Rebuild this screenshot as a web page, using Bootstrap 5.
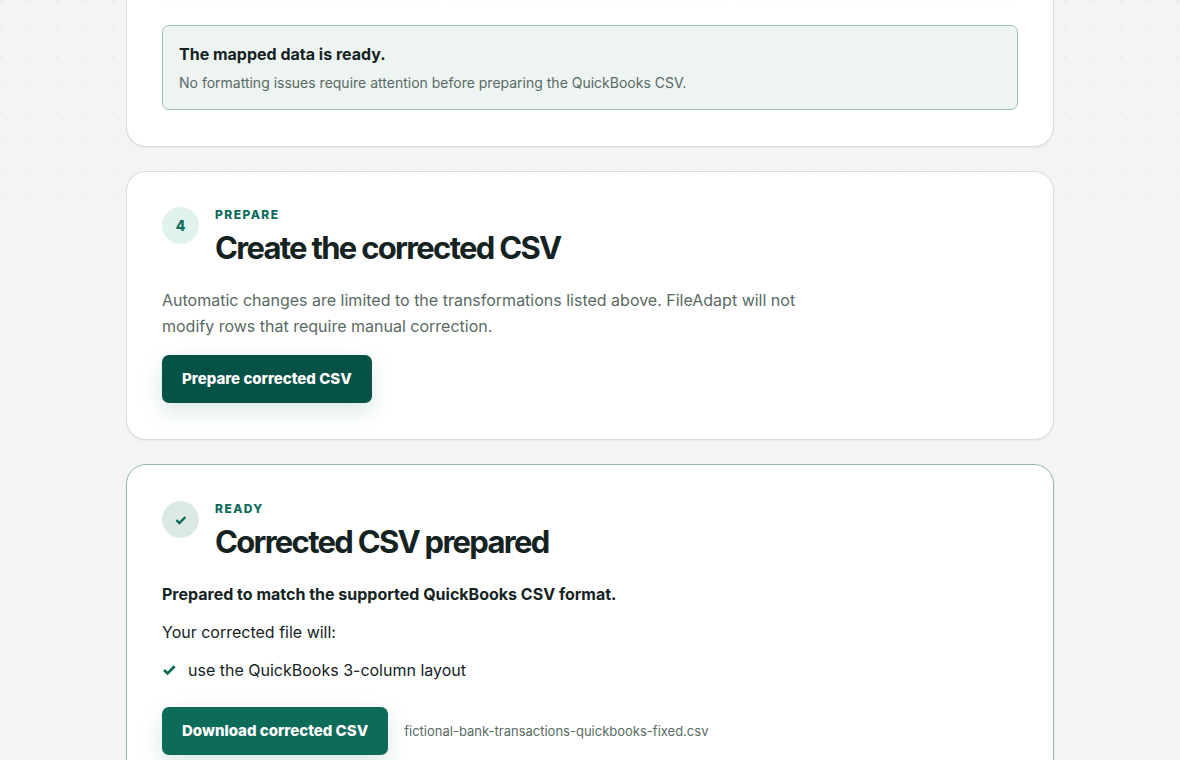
<!DOCTYPE html>
<html lang="en">
<head>
<meta charset="utf-8">
<meta name="viewport" content="width=device-width, initial-scale=1">
<title>FileAdapt</title>
<link href="https://cdn.jsdelivr.net/npm/bootstrap@5.3.0/dist/css/bootstrap.min.css" rel="stylesheet">
<style>
  body {
    font-family: Inter, "Liberation Sans", sans-serif;
    line-height: 26px;
    color: #14231f;
    background: #f4f4f2;
  }
  .dot-field {
    background:
      linear-gradient(rgba(244, 244, 242, 0), rgba(244, 244, 242, .4) 200px, #f4f4f2 330px),
      conic-gradient(from 270deg at 2px 2px, #e9eae8 90deg, transparent 0) 0 0 / 28px 28px;
  }
  .flow { max-width: 928px; }
  .step-panel {
    background: #fff;
    border: 1px solid #d5dedb;
    border-radius: 20px;
    padding: 35px 35px 36px;
    box-shadow: 0 1px 2px rgba(20, 35, 31, .06);
  }
  .step-first {
    border-top: 0;
    border-top-left-radius: 0;
    border-top-right-radius: 0;
    padding-top: 0;
  }
  .step-ready { border-color: #8fb9ac; padding-top: 36px; }
  .stat-edge { height: 1px; background: #f9faf9; }
  .notice {
    background: #eef4f2;
    border: 1px solid #9fc1b6;
    border-radius: 7px;
    line-height: 24px;
  }
  .notice p { font-size: 14px; line-height: 21px; margin-top: 6px; }
  .quiet { color: #586a64; }
  .heavy { font-weight: 800; }
  .step-mark {
    width: 37px;
    height: 37px;
    font-size: 14px;
    color: #0d6b5a;
    background: #dff2eb;
  }
  .step-ready .step-mark { background: #dbe9e4; }
  .eyebrow {
    font-size: 12px;
    line-height: 16px;
    letter-spacing: .12em;
    color: #0d6b5a;
  }
  .step-title {
    font-size: 31px;
    line-height: 36px;
    letter-spacing: -.055em;
    margin-top: 7px;
  }
  .step-head { margin-bottom: 21px; }
  .measure { max-width: 670px; }
  .action {
    --bs-btn-color: #fff;
    --bs-btn-bg: #0d6b5a;
    --bs-btn-hover-color: #fff;
    --bs-btn-hover-bg: #075246;
    --bs-btn-active-color: #fff;
    --bs-btn-active-bg: #075246;
    --bs-btn-padding-x: 20px;
    --bs-btn-padding-y: 12px;
    --bs-btn-border-width: 0;
    --bs-btn-border-radius: 7px;
    --bs-btn-font-size: 15px;
    --bs-btn-line-height: 24px;
    --bs-btn-font-weight: 800;
    box-shadow: 0 8px 22px rgba(13, 107, 90, .16);
  }
  .action-done { --bs-btn-bg: #075246; }
  .file-name { font-size: 13px; }
  .changes li { gap: 11px; }
</style>
</head>
<body>
<div class="dot-field">
<main class="flow mx-auto d-flex flex-column gap-4">
  <section class="step-panel step-first">
    <div class="row gx-3 px-1">
      <div class="col-4"><div class="stat-edge"></div></div>
      <div class="col-4"><div class="stat-edge"></div></div>
      <div class="col-4"><div class="stat-edge"></div></div>
    </div>
    <div class="notice mt-4 p-3" role="status">
      <strong class="d-block">The mapped data is ready.</strong>
      <p class="quiet mb-0">No formatting issues require attention before preparing the QuickBooks CSV.</p>
    </div>
  </section>

  <section class="step-panel">
    <header class="step-head d-flex gap-3">
      <span class="step-mark heavy rounded-circle d-flex align-items-center justify-content-center flex-shrink-0">4</span>
      <div>
        <p class="eyebrow heavy mb-0">PREPARE</p>
        <h2 class="step-title fw-bold mb-0">Create the corrected CSV</h2>
      </div>
    </header>
    <p class="quiet measure mb-3">Automatic changes are limited to the transformations listed above. FileAdapt will not modify rows that require manual correction.</p>
    <button type="button" class="btn action action-done">Prepare corrected CSV</button>
  </section>

  <section class="step-panel step-ready">
    <header class="step-head d-flex gap-3">
      <span class="step-mark rounded-circle d-flex align-items-center justify-content-center flex-shrink-0">
        <svg width="12" height="10" viewBox="0 0 12 10" fill="none" stroke="currentColor" stroke-width="2.4" aria-hidden="true"><path d="M1.4 5.2 4.4 8 10.4 2"/></svg>
      </span>
      <div>
        <p class="eyebrow heavy mb-0">READY</p>
        <h2 class="step-title fw-bold mb-0">Corrected CSV prepared</h2>
      </div>
    </header>
    <p class="fw-bold mb-2">Prepared to match the supported QuickBooks CSV format.</p>
    <p class="mb-2 pt-1">Your corrected file will:</p>
    <ul class="changes list-unstyled mb-4 pt-1">
      <li class="d-flex align-items-center">
        <svg width="15" height="12" viewBox="0 0 15 12" fill="none" stroke="#0d6b5a" stroke-width="2.8" aria-hidden="true"><path d="M2 6 5.6 9.4 12.6 2.2"/></svg>
        use the QuickBooks 3-column layout
      </li>
    </ul>
    <div class="d-flex align-items-center gap-3">
      <button type="button" class="btn action">Download corrected CSV</button>
      <span class="file-name quiet">fictional-bank-transactions-quickbooks-fixed.csv</span>
    </div>
  </section>
</main>
</div>
<script src="https://cdn.jsdelivr.net/npm/bootstrap@5.3.0/dist/js/bootstrap.bundle.min.js"></script>
</body>
</html>
